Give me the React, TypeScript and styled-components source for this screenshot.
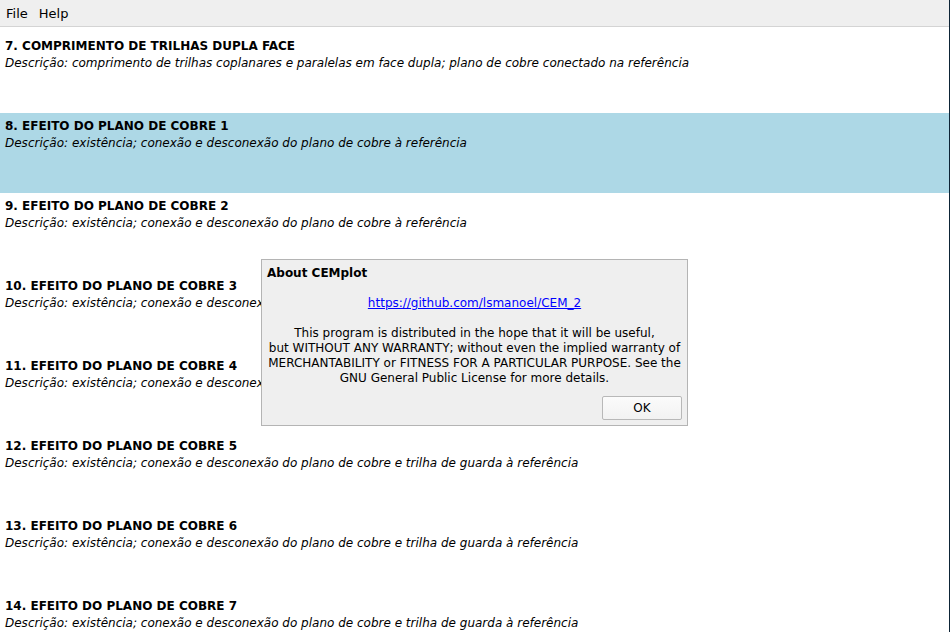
import React from "react";
import styled, { createGlobalStyle } from "styled-components";

const Global = createGlobalStyle`
  html, body { margin: 0; padding: 0; background: #ffffff; }
  body { font-family: "DejaVu Sans", sans-serif; overflow: hidden; }
`;

const Window = styled.div`
  position: relative;
  width: 950px;
  height: 632px;
  display: flex;
  flex-direction: column;
  background: #ffffff;
  overflow: hidden;
  box-sizing: border-box;
  border-right: 1px solid #0d2436;
`;

const MenuBar = styled.div`
  height: 26px;
  flex: 0 0 26px;
  display: flex;
  align-items: center;
  background: #efefef;
  border-bottom: 1px solid #d4d4d4;
  font-size: 13px;
  color: #000;
`;

const MenuItem = styled.span`
  padding: 0 5px 0 6px;
`;

const List = styled.div`
  padding-top: 6px;
  display: flex;
  flex-direction: column;
`;

const Row = styled.div<{ $selected?: boolean }>`
  height: 80px;
  flex: 0 0 80px;
  box-sizing: border-box;
  padding: 5px 5px 0 5px;
  background: ${(p) => (p.$selected ? "#add8e6" : "#ffffff")};
  color: #000;
`;

const Title = styled.div`
  font-weight: bold;
  font-size: 12px;
  line-height: 17px;
`;

const Desc = styled.div`
  font-style: italic;
  font-size: 12px;
  line-height: 17px;
`;

const Dialog = styled.div`
  position: absolute;
  left: 261px;
  top: 259px;
  width: 427px;
  height: 167px;
  box-sizing: border-box;
  background: #efefef;
  border: 1px solid #b4b4b4;
  display: flex;
  flex-direction: column;
  padding: 5px;
  font-size: 12px;
  color: #000;
`;

const DialogTitle = styled.div`
  font-weight: bold;
  font-size: 12px;
  line-height: 16px;
`;

const DialogBody = styled.div`
  text-align: center;
  line-height: 15px;
  margin-top: 15px;
`;

const Link = styled.a`
  color: #0000ff;
  text-decoration: underline;
`;

const Notice = styled.p`
  margin: 15px 0 0 0;
`;

const ButtonRow = styled.div`
  margin-top: auto;
  display: flex;
  justify-content: flex-end;
`;

const OkButton = styled.button`
  width: 80px;
  height: 24px;
  box-sizing: border-box;
  border: 1px solid #b8b8b8;
  border-radius: 2px;
  background: linear-gradient(#fbfbfb, #f2f2f2);
  font-family: "DejaVu Sans", sans-serif;
  font-size: 12px;
  color: #000;
  padding: 0;
`;

const rows = [
  ["7. COMPRIMENTO DE TRILHAS DUPLA FACE", "Descrição: comprimento de trilhas coplanares e paralelas em face dupla; plano de cobre conectado na referência"],
  ["8. EFEITO DO PLANO DE COBRE 1", "Descrição: existência; conexão e desconexão do plano de cobre à referência"],
  ["9. EFEITO DO PLANO DE COBRE 2", "Descrição: existência; conexão e desconexão do plano de cobre à referência"],
  ["10. EFEITO DO PLANO DE COBRE 3", "Descrição: existência; conexão e desconexão do plano de cobre à referência"],
  ["11. EFEITO DO PLANO DE COBRE 4", "Descrição: existência; conexão e desconexão do plano de cobre à referência"],
  ["12. EFEITO DO PLANO DE COBRE 5", "Descrição: existência; conexão e desconexão do plano de cobre e trilha de guarda à referência"],
  ["13. EFEITO DO PLANO DE COBRE 6", "Descrição: existência; conexão e desconexão do plano de cobre e trilha de guarda à referência"],
  ["14. EFEITO DO PLANO DE COBRE 7", "Descrição: existência; conexão e desconexão do plano de cobre e trilha de guarda à referência"],
];

export default function App() {
  return (
    <Window>
      <Global />
      <MenuBar>
        <MenuItem>File</MenuItem>
        <MenuItem>Help</MenuItem>
      </MenuBar>
      <List>
        {rows.map(([t, d], i) => (
          <Row key={t} $selected={i === 1}>
            <Title>{t}</Title>
            <Desc>{d}</Desc>
          </Row>
        ))}
      </List>
      <Dialog>
        <DialogTitle>About CEMplot</DialogTitle>
        <DialogBody>
          <Link href="#">https://github.com/lsmanoel/CEM_2</Link>
          <Notice>
            This program is distributed in the hope that it will be useful,
            <br />
            but WITHOUT ANY WARRANTY; without even the implied warranty of
            <br />
            MERCHANTABILITY or FITNESS FOR A PARTICULAR PURPOSE. See the
            <br />
            GNU General Public License for more details.
          </Notice>
        </DialogBody>
        <ButtonRow>
          <OkButton>OK</OkButton>
        </ButtonRow>
      </Dialog>
    </Window>
  );
}
